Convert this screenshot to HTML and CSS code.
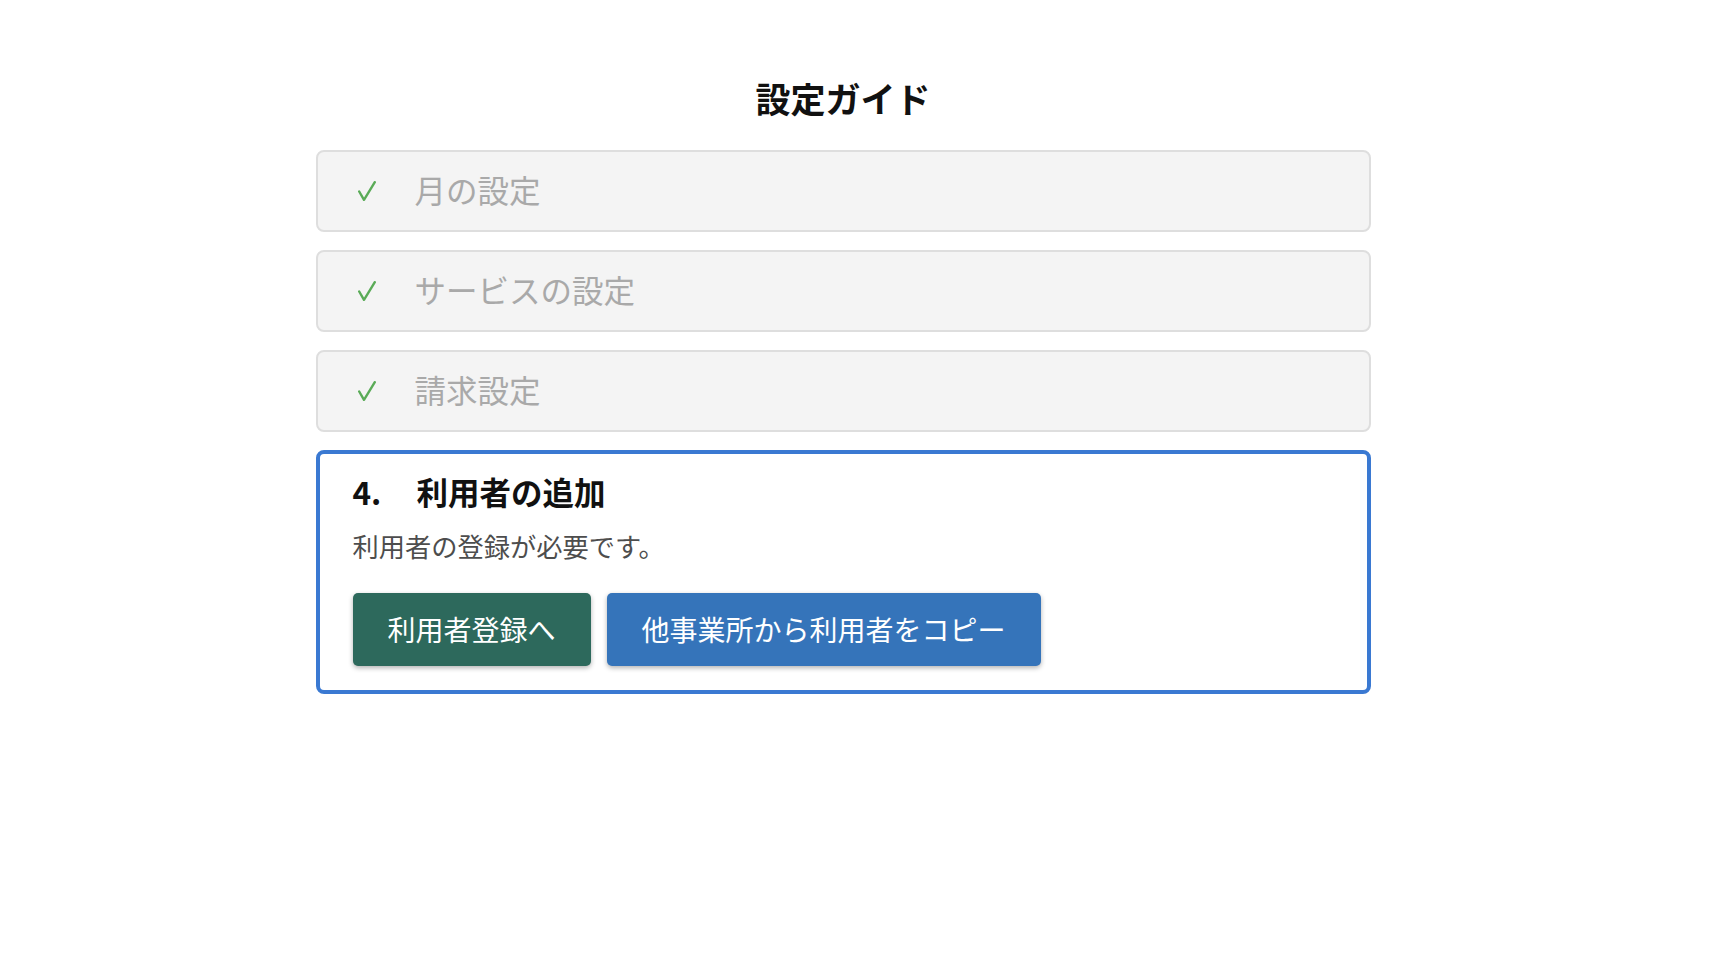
FILE: index.html
```html
<!DOCTYPE html>
<html lang="ja">
<head>
<meta charset="utf-8">
<title>設定ガイド</title>
<link rel="stylesheet" href="styles.css">
</head>
<body>
<main class="page">
  <h1 class="page-title">設定ガイド</h1>
  <ol class="steps">
    <li class="step step-done">
      <svg class="check" width="18" height="20" viewBox="0 0 18 20"><polyline points="1.2,10.5 6,18.8 16.8,1.2" fill="none" stroke="#5aab57" stroke-width="2.4" stroke-linecap="round" stroke-linejoin="round"/></svg>
      <span class="step-label">月の設定</span>
    </li>
    <li class="step step-done">
      <svg class="check" width="18" height="20" viewBox="0 0 18 20"><polyline points="1.2,10.5 6,18.8 16.8,1.2" fill="none" stroke="#5aab57" stroke-width="2.4" stroke-linecap="round" stroke-linejoin="round"/></svg>
      <span class="step-label">サービスの設定</span>
    </li>
    <li class="step step-done">
      <svg class="check" width="18" height="20" viewBox="0 0 18 20"><polyline points="1.2,10.5 6,18.8 16.8,1.2" fill="none" stroke="#5aab57" stroke-width="2.4" stroke-linecap="round" stroke-linejoin="round"/></svg>
      <span class="step-label">請求設定</span>
    </li>
    <li class="step-current">
      <h2 class="current-title"><span class="current-num">4.</span><span>利用者の追加</span></h2>
      <p class="current-desc">利用者の登録が必要です。</p>
      <div class="actions">
        <button class="btn btn-green" type="button">利用者登録へ</button>
        <button class="btn btn-blue" type="button">他事業所から利用者をコピー</button>
      </div>
    </li>
  </ol>
</main>
</body>
</html>
```

FILE: styles.css
```css
* { box-sizing: border-box; }

html, body {
  margin: 0;
  padding: 0;
  background: #ffffff;
}

body {
  font-family: "Noto Sans CJK JP", "Noto Sans", "Liberation Sans", sans-serif;
  color: #1a1a1a;
  padding-right: 40px;
}

.page {
  width: 1055px;
  margin: 0 auto;
  padding-top: 77px;
}

.page-title {
  margin: 0 0 31px;
  text-align: center;
  font-size: 35px;
  line-height: 42px;
  font-weight: 700;
  color: #111;
}

.steps {
  list-style: none;
  margin: 0;
  padding: 0;
  display: flex;
  flex-direction: column;
  gap: 18px;
}

.step {
  display: flex;
  align-items: center;
  height: 82px;
  padding: 0 0 0 40px;
  background: #f4f4f4;
  border: 2px solid #dedede;
  border-radius: 8px;
}

.check {
  flex: none;
  margin-right: 39px;
  margin-bottom: 1px;
}

.step-label {
  font-size: 31.5px;
  line-height: 46px;
  margin-bottom: 4px;
  color: #a9a9a9;
}

.step-current {
  border: 4px solid #3a79d2;
  border-radius: 8px;
  padding: 14px 33px 24px;
  background: #fff;
}

.current-title {
  margin: 0;
  display: flex;
  font-size: 31.5px;
  line-height: 46px;
  font-weight: 700;
  color: #111;
}

.current-num {
  width: 64px;
}

.current-desc {
  margin: 12px 0 0;
  font-size: 26.25px;
  line-height: 40px;
  color: #4d4d4d;
}

.actions {
  display: flex;
  gap: 16px;
  margin-top: 27px;
}

.btn {
  font-family: inherit;
  font-size: 28px;
  line-height: 41px;
  height: 73px;
  padding: 0 35px;
  border: none;
  border-radius: 5px;
  color: #fff;
  box-shadow: 0 2px 5px rgba(0, 0, 0, 0.3);
  cursor: pointer;
}

.btn-green { background: #2d695c; }
.btn-blue { background: #3574ba; }
```
